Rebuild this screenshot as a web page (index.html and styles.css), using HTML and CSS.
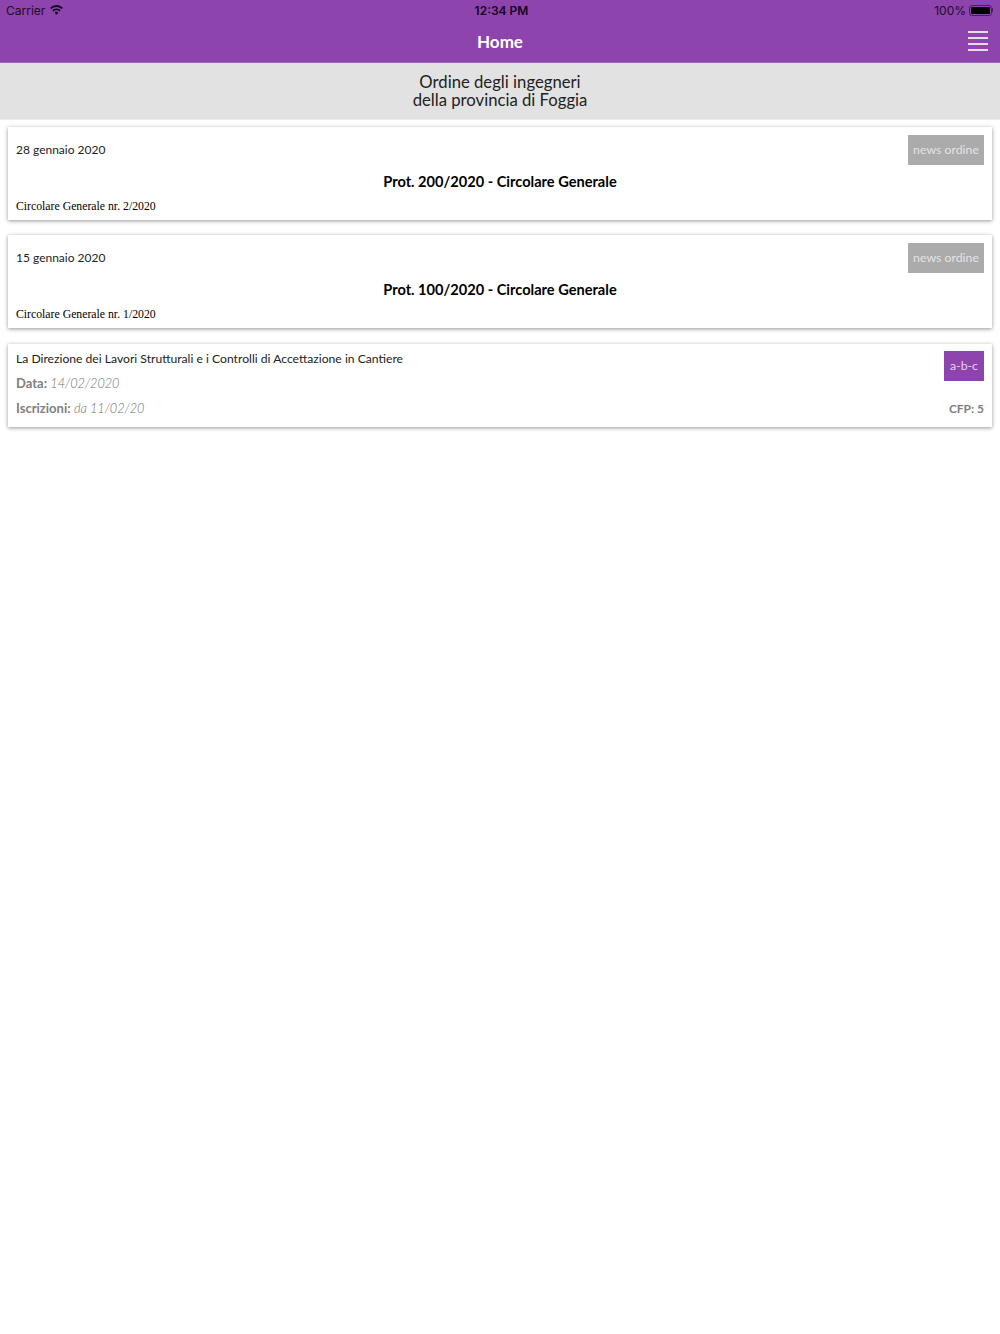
FILE: index.html
```html
<!DOCTYPE html>
<html lang="it">
<head>
<meta charset="utf-8">
<title>Home</title>
<link rel="stylesheet" href="styles.css">
</head>
<body>
<header class="app-header">
  <div class="status-bar">
    <div class="status-left">
      <span>Carrier</span>
      <svg class="wifi" width="13" height="10" viewBox="0 0 14 10" aria-hidden="true"><path d="M7 10 4.900 7.700a3 3 0 0 1 4.200 0ZM3.900 6.600 2.500 5.100a6.400 6.400 0 0 1 9 0l-1.400 1.500a4.400 4.400 0 0 0-6.200 0ZM1.500 4 0 2.500a10 10 0 0 1 14 0L12.500 4a8 8 0 0 0-11 0Z"/></svg>
    </div>
    <div class="status-time">12:34 PM</div>
    <div class="status-right">
      <span>100%</span>
      <span class="battery"><span class="battery-fill"></span></span>
      <span class="battery-tip"></span>
    </div>
  </div>
  <div class="nav-bar">
    <h1 class="nav-title">Home</h1>
    <button class="menu-button" aria-label="Menu">
      <span class="menu-line"></span><span class="menu-line"></span><span class="menu-line"></span><span class="menu-line"></span>
    </button>
  </div>
</header>
<div class="org-banner">Ordine degli ingegneri<br>della provincia di Foggia</div>
<main class="card-list">
  <article class="card news-card">
    <div class="news-top">
      <span class="news-date">28 gennaio 2020</span>
      <span class="tag tag-grey">news ordine</span>
    </div>
    <h2 class="news-title">Prot. 200/2020 - Circolare Generale</h2>
    <p class="news-body">Circolare Generale nr. 2/2020</p>
  </article>
  <article class="card news-card">
    <div class="news-top">
      <span class="news-date">15 gennaio 2020</span>
      <span class="tag tag-grey">news ordine</span>
    </div>
    <h2 class="news-title">Prot. 100/2020 - Circolare Generale</h2>
    <p class="news-body">Circolare Generale nr. 1/2020</p>
  </article>
  <article class="card course-card">
    <div class="course-main">
      <p class="course-title">La Direzione dei Lavori Strutturali e i Controlli di Accettazione in Cantiere</p>
      <p class="course-meta course-date"><b>Data:</b> <i>14/02/2020</i></p>
      <p class="course-meta course-sub"><b>Iscrizioni:</b> <i>da 11/02/20</i></p>
    </div>
    <div class="course-side">
      <span class="tag tag-purple">a-b-c</span>
      <span class="course-cfp">CFP: 5</span>
    </div>
  </article>
</main>
</body>
</html>
```
FILE: styles.css
```css
* { box-sizing: border-box; }
html, body { margin: 0; padding: 0; }
body {
  width: 1000px;
  min-height: 1334px;
  background: #fff;
  font-family: "Lato", "Noto Sans", sans-serif;
  color: #111;
}
p, h1, h2 { margin: 0; }

.app-header { height: 63px; background: #8e44ad; border-bottom: 1px solid #a566c0; }
.status-bar {
  height: 20px;
  padding: 0 6px;
  display: grid;
  grid-template-columns: 1fr auto 1fr;
  align-items: center;
  font-family: "Inter", sans-serif;
  font-size: 12px;
  color: #1d0a26;
}
.status-left { display: flex; align-items: center; gap: 5px; }
.wifi { fill: #12041a; }
.status-time { font-weight: 600; padding-left: 3px; color: #14051c; }
.status-right { display: flex; justify-content: flex-end; align-items: center; }
.battery {
  width: 23px; height: 11px; margin-left: 3px; padding: 1px;
  border: 1px solid #4a1f5c; border-radius: 3px; display: block;
}
.battery-fill { display: block; width: 100%; height: 100%; background: #000; border-radius: 1px; }
.battery-tip { width: 1px; height: 4px; background: #4a1f5c; margin-right: 1px; }

.nav-bar { height: 42px; display: flex; align-items: center; justify-content: center; position: relative; }
.nav-title { font-size: 17px; font-weight: 700; color: #fff; }
.menu-button {
  position: absolute; right: 12px; top: 11px;
  width: 20px; padding: 0; border: 0; background: none;
  display: flex; flex-direction: column; gap: 4px;
}
.menu-line { display: block; height: 2px; background: #ead8f1; }

.org-banner {
  height: 57px;
  padding-top: 10px;
  background: #e2e2e2;
  border-bottom: 1px solid #ececec;
  text-align: center;
  font-size: 16.7px;
  line-height: 18px;
  color: #222;
}

.card-list { padding: 7px 8px 0; display: flex; flex-direction: column; gap: 15px; }
.card { background: #fff; box-shadow: 0 1px 4px rgba(0,0,0,.42); }

.news-card { height: 93px; padding: 8px; }
.news-top { height: 30px; display: flex; justify-content: space-between; align-items: center; }
.news-date { font-size: 12px; line-height: 16px; color: #222; }
.tag {
  height: 30px;
  padding-bottom: 1px;
  display: flex; align-items: center; justify-content: center;
  font-size: 12.3px; color: #e4e4e4; white-space: nowrap;
}
.tag-grey { width: 76px; background: #ababab; }
.tag-purple { width: 40px; background: #8e44ad; color: #e6d2ee; }
.news-title { margin-top: 8px; font-size: 14.6px; line-height: 18px; font-weight: 700; text-align: center; color: #000; }
.news-body { margin-top: 8px; font-family: "Liberation Serif", serif; font-size: 11.75px; line-height: 16px; color: #000; }

.course-card { height: 83px; margin-top: 1px; padding: 7px 8px 0; display: flex; justify-content: space-between; }
.course-title { font-size: 12.15px; line-height: 16px; color: #222; }
.course-meta { font-size: 13px; line-height: 16px; color: #808080; }
.course-meta i { font-size: 12.7px; font-weight: 300; color: #6f6f6f; }
.course-date { margin-top: 8px; }
.course-sub { margin-top: 9px; }
.course-side { display: flex; flex-direction: column; align-items: flex-end; }
.course-cfp { margin-top: 20px; font-size: 12px; line-height: 16px; font-weight: 700; color: #808080; }
```
